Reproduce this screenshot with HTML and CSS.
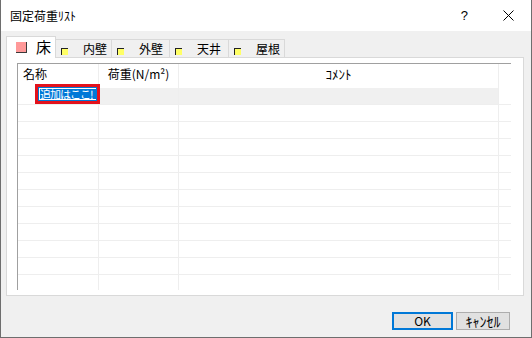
FILE: index.html
```html
<!DOCTYPE html>
<html lang="ja">
<head>
<meta charset="utf-8">
<title>固定荷重ﾘｽﾄ</title>
<link rel="stylesheet" href="styles.css">
</head>
<body>
<div class="window">
  <div class="titlebar">
    <span class="title">固定荷重ﾘｽﾄ</span>
    <span class="help">?</span>
    <svg class="close" width="11" height="11" viewBox="0 0 11 11"><path d="M0.5 0.5 L10.5 10.5 M10.5 0.5 L0.5 10.5" stroke="#000" stroke-width="1" fill="none"/></svg>
  </div>
  <div class="content">
    <div class="tabs">
      <div class="tab active"><span class="ico pink"></span><span class="tlabel">床</span></div>
      <div class="tab w56"><span class="ico yellow"></span><span>内壁</span></div>
      <div class="tab w58"><span class="ico yellow"></span><span>外壁</span></div>
      <div class="tab w59"><span class="ico yellow"></span><span>天井</span></div>
      <div class="tab w56"><span class="ico yellow"></span><span>屋根</span></div>
    </div>
    <div class="panel">
      <div class="list">
        <div class="row head">
          <div class="c c1">名称</div>
          <div class="c c2 center">荷重(N/m²)</div>
          <div class="c c3 center">ｺﾒﾝﾄ</div>
          <div class="c c4"></div>
        </div>
        <div class="row sel">
          <div class="c c1"></div>
          <div class="c c2"></div>
          <div class="c c3"></div>
          <div class="c c4"></div>
          <div class="edit"><span class="edit-inner">追加はここ!</span></div>
        </div>
        <div class="row"><div class="c c1"></div><div class="c c2"></div><div class="c c3"></div><div class="c c4"></div></div>
        <div class="row"><div class="c c1"></div><div class="c c2"></div><div class="c c3"></div><div class="c c4"></div></div>
        <div class="row"><div class="c c1"></div><div class="c c2"></div><div class="c c3"></div><div class="c c4"></div></div>
        <div class="row"><div class="c c1"></div><div class="c c2"></div><div class="c c3"></div><div class="c c4"></div></div>
        <div class="row"><div class="c c1"></div><div class="c c2"></div><div class="c c3"></div><div class="c c4"></div></div>
        <div class="row"><div class="c c1"></div><div class="c c2"></div><div class="c c3"></div><div class="c c4"></div></div>
        <div class="row"><div class="c c1"></div><div class="c c2"></div><div class="c c3"></div><div class="c c4"></div></div>
        <div class="row"><div class="c c1"></div><div class="c c2"></div><div class="c c3"></div><div class="c c4"></div></div>
        <div class="row"><div class="c c1"></div><div class="c c2"></div><div class="c c3"></div><div class="c c4"></div></div>
        <div class="row"><div class="c c1"></div><div class="c c2"></div><div class="c c3"></div><div class="c c4"></div></div>
        <div class="row"><div class="c c1"></div><div class="c c2"></div><div class="c c3"></div><div class="c c4"></div></div>
      </div>
    </div>
    <div class="buttons">
      <button class="btn ok">OK</button>
      <button class="btn cancel">ｷｬﾝｾﾙ</button>
    </div>
  </div>
</div>
</body>
</html>
```
FILE: styles.css
```css
html, body {
  margin: 0;
  padding: 0;
  background: #ffffff;
}
.window {
  width: 532px;
  height: 338px;
  box-sizing: border-box;
  border: 1px solid #6e6e6e;
  border-top: none;
  background: #f0f0f0;
  display: flex;
  flex-direction: column;
  font-family: "Noto Sans CJK JP", "Liberation Sans", sans-serif;
  font-size: 12px;
  color: #000;
}
.titlebar {
  height: 31px;
  flex: none;
  background: #fff;
  display: flex;
  align-items: center;
  padding-left: 9px;
  padding-right: 17px;
}
.title {
  font-size: 12px;
  line-height: 14px;
}
.help {
  margin-left: auto;
  margin-right: 35px;
  font-family: "Liberation Sans", sans-serif;
  font-size: 13px;
}
.close {
  display: block;
}
.content {
  flex: 1;
  display: flex;
  flex-direction: column;
  padding: 5px 7px 0 5px;
}
.tabs {
  display: flex;
  align-items: flex-end;
  height: 21px;
  position: relative;
  z-index: 1;
}
.tab {
  box-sizing: border-box;
  height: 18px;
  border-top: 1px solid #d9d9d9;
  border-right: 1px solid #d9d9d9;
  display: flex;
  align-items: center;
  padding-left: 5px;
  line-height: 14px;
  background: #f0f0f0;
}
.tab.w56 { width: 56px; }
.tab.w58 { width: 58px; }
.tab.w59 { width: 59px; }
.tab.active {
  width: 50px;
  height: 22px;
  margin-bottom: -1px;
  border-left: 1px solid #d9d9d9;
  background: #fff;
  padding-left: 9px;
  padding-bottom: 1px;
}
.tlabel {
  font-size: 15px;
}
.ico {
  display: block;
  box-sizing: border-box;
  flex: none;
}
.ico.pink {
  width: 11px;
  height: 11px;
  background: #ff9999;
  border-right: 1px solid #3a3a3a;
  border-bottom: 1px solid #3a3a3a;
  margin-right: 9px;
}
.ico.yellow {
  width: 7px;
  height: 7px;
  background: #ffff66;
  border-top: 1px solid #222;
  border-left: 1px solid #222;
  margin-top: 6px;
  margin-right: 15px;
}
.panel {
  box-sizing: border-box;
  width: 518px;
  height: 239px;
  border: 1px solid #d9d9d9;
  background: #fff;
  padding: 5px 0 0 10px;
}
.list {
  box-sizing: border-box;
  width: 494px;
  height: 227px;
  border-top: 1px solid #a0a0a0;
  border-left: 1px solid #a0a0a0;
  overflow: hidden;
}
.row {
  display: grid;
  grid-template-columns: 81px 80px 320px 1fr;
  height: 17px;
  box-sizing: border-box;
  border-bottom: 1px solid #eeeeee;
  position: relative;
}
.row.head {
  height: 24px;
  border-bottom: none;
  line-height: 20px;
}
.c {
  box-sizing: border-box;
  border-right: 1px solid #eeeeee;
  white-space: nowrap;
  overflow: hidden;
}
.c4 { border-right: none; }
.head .c1 { padding-left: 5px; }
.head .c3 { font-size: 13px; }
.center { text-align: center; }
.sel .c2, .sel .c3 { background: #f0f0f0; }
.edit {
  position: absolute;
  left: 17px;
  top: -4px;
  width: 65px;
  height: 20px;
  box-sizing: border-box;
  border: 3px solid #e3121c;
  background: #0078d7;
  padding: 1px;
  display: flex;
}
.edit-inner {
  flex: 1;
  box-sizing: border-box;
  border: 1px solid #fff;
  border-right: none;
  color: #fff;
  line-height: 11px;
  font-size: 11px;
  letter-spacing: -1px;
  padding-left: 0;
  white-space: nowrap;
  overflow: visible;
}
.buttons {
  display: flex;
  justify-content: flex-end;
  gap: 3px;
  margin-top: 16px;
  padding-right: 14px;
}
.btn {
  box-sizing: border-box;
  height: 18px;
  padding: 0;
  font-family: "Noto Sans CJK JP", "Liberation Sans", sans-serif;
  font-size: 12px;
  line-height: 14px;
  background: #e1e1e1;
  color: #000;
}
.btn.ok {
  width: 61px;
  border: 2px solid #0078d7;
}
.btn.cancel {
  width: 54px;
  border: 1px solid #adadad;
  font-size: 14px;
}
```
